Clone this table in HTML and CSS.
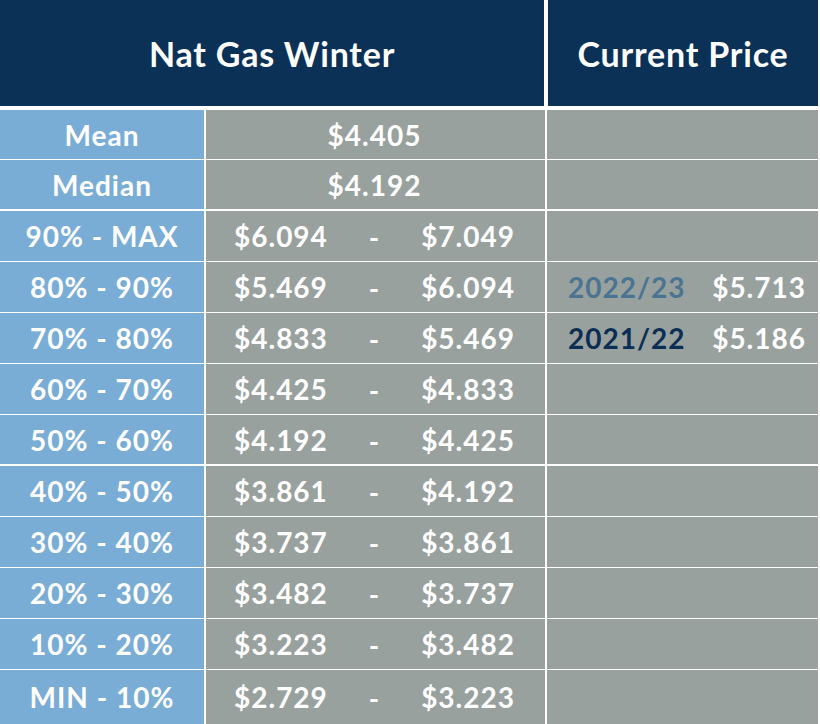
FILE: index.html
```html
<!DOCTYPE html>
<html lang="en">
<head>
<meta charset="utf-8">
<title>Nat Gas Winter</title>
<link rel="stylesheet" href="styles.css">
</head>
<body>
<div class="table">
  <div class="head">
    <div class="h h-main">Nat Gas Winter</div>
    <div class="h h-cur">Current Price</div>
  </div>
  <div class="group g1">
    <div class="lbl">Mean</div><div class="val single">$4.405</div><div class="cur"></div>
    <div class="lbl">Median</div><div class="val single">$4.192</div><div class="cur"></div>
  </div>
  <div class="group g2">
    <div class="lbl">90% - MAX</div><div class="val"><span>$6.094</span><span class="dash">-</span><span>$7.049</span></div><div class="cur"></div>
    <div class="lbl">80% - 90%</div><div class="val"><span>$5.469</span><span class="dash">-</span><span>$6.094</span></div><div class="cur"><span class="yr yr-a">2022/23</span><span>$5.713</span></div>
    <div class="lbl">70% - 80%</div><div class="val"><span>$4.833</span><span class="dash">-</span><span>$5.469</span></div><div class="cur"><span class="yr yr-b">2021/22</span><span>$5.186</span></div>
    <div class="lbl">60% - 70%</div><div class="val"><span>$4.425</span><span class="dash">-</span><span>$4.833</span></div><div class="cur"></div>
    <div class="lbl">50% - 60%</div><div class="val"><span>$4.192</span><span class="dash">-</span><span>$4.425</span></div><div class="cur"></div>
  </div>
  <div class="group g3">
    <div class="lbl">40% - 50%</div><div class="val"><span>$3.861</span><span class="dash">-</span><span>$4.192</span></div><div class="cur"></div>
    <div class="lbl">30% - 40%</div><div class="val"><span>$3.737</span><span class="dash">-</span><span>$3.861</span></div><div class="cur"></div>
    <div class="lbl">20% - 30%</div><div class="val"><span>$3.482</span><span class="dash">-</span><span>$3.737</span></div><div class="cur"></div>
    <div class="lbl">10% - 20%</div><div class="val"><span>$3.223</span><span class="dash">-</span><span>$3.482</span></div><div class="cur"></div>
    <div class="lbl">MIN - 10%</div><div class="val"><span>$2.729</span><span class="dash">-</span><span>$3.223</span></div><div class="cur"></div>
  </div>
</div>
</body>
</html>
```
FILE: styles.css
```css
html, body {
  margin: 0;
  padding: 0;
  background: #ffffff;
}
body {
  font-family: "Lato", "Open Sans", sans-serif;
  color: #ffffff;
}
.table {
  width: 818px;
  height: 724px;
  display: flex;
  flex-direction: column;
}
.head {
  display: flex;
  gap: 4px;
  height: 106px;
  margin-bottom: 4px;
}
.h {
  background: #0b3157;
  display: flex;
  align-items: center;
  justify-content: center;
  font-size: 34px;
  font-weight: 700;
  letter-spacing: 0.8px;
}
.h-main { width: 544px; }
.h-cur { flex: 1; }
.group {
  display: grid;
  grid-template-columns: 204px 339px 1fr;
  column-gap: 2px;
  row-gap: 1px;
}
.g1 { grid-template-rows: 49px 49px; }
.g2 { grid-template-rows: 50px 50px 50px 50px 49px; margin-top: 2px; }
.g3 { grid-template-rows: 50px 50px 50px 50px 1fr; margin-top: 2px; flex: 1; }
.lbl, .val, .cur {
  display: flex;
  align-items: center;
  font-size: 28px;
  font-weight: 700;
  letter-spacing: 1px;
}
.lbl {
  background: #7aadd5;
  justify-content: center;
}
.val {
  background: #99a19f;
  justify-content: space-between;
  padding: 0 30px 0 28px;
}
.val.single { justify-content: center; }
.dash { padding-top: 2px; }
.cur {
  background: #99a19f;
  justify-content: space-between;
  padding: 0 12px 0 21px;
}
.yr-a { color: #4a7491; }
.yr-b { color: #0c2e55; }
```
